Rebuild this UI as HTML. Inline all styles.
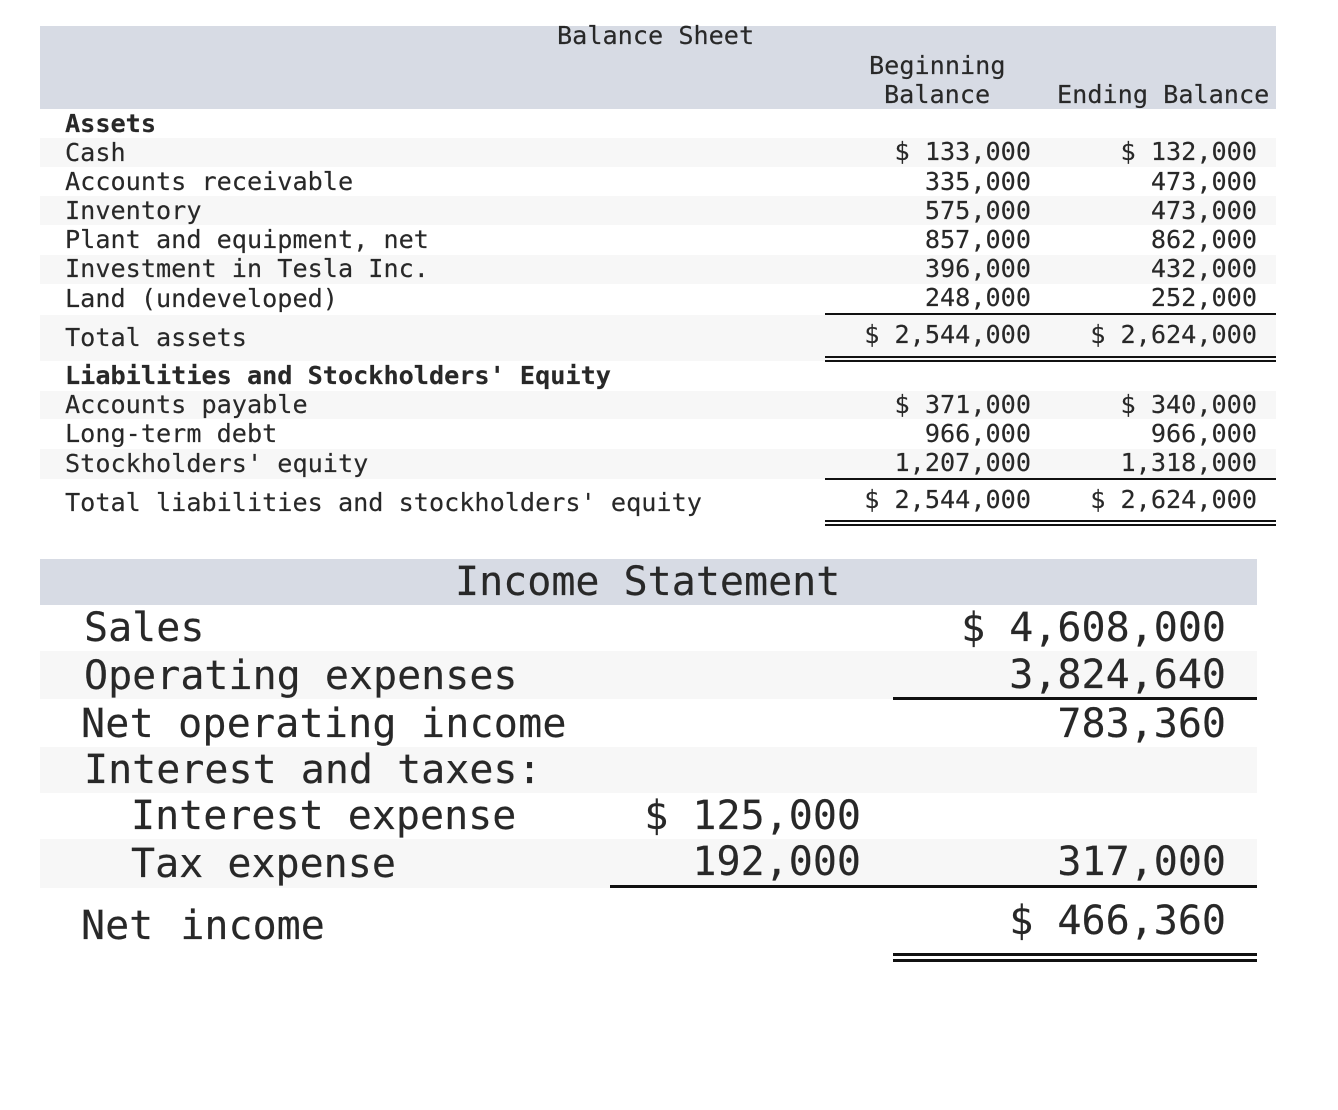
<!DOCTYPE html>
<html>
<head>
<meta charset="utf-8">
<style>
html,body{margin:0;padding:0;background:#fff;}
#p{position:relative;width:1338px;height:1110px;overflow:hidden;background:#fff;font-family:"DejaVu Sans Mono","Liberation Mono",monospace;color:#282828;-webkit-text-stroke:.15px #282828;}
#p div{position:absolute;white-space:pre;}
.b{left:40px;width:1236px;background:#f7f7f7;}
.i{left:40px;width:1217px;background:#f7f7f7;}
.b.h,.i.h{background:#d7dbe4;}
.l{background:#111;}
.s{font-size:25.2px;line-height:30px;}
.g{font-size:40px;line-height:50px;}
.r1{right:307px;}
.r2{right:81px;}
.r3{right:112px;}
.r4{right:477px;}
</style>
</head>
<body>
<div id="p">
<div class="b h" style="top:26px;height:83px"></div>
<div class="b" style="top:138px;height:29px"></div>
<div class="b" style="top:196px;height:29px"></div>
<div class="b" style="top:255px;height:29px"></div>
<div class="b" style="top:315px;height:46px"></div>
<div class="b" style="top:391px;height:28px"></div>
<div class="b" style="top:449px;height:30px"></div>
<div class="i h" style="top:559px;height:46px"></div>
<div class="i" style="top:651px;height:48px"></div>
<div class="i" style="top:747px;height:46px"></div>
<div class="i" style="top:839px;height:49px"></div>

<div class="l" style="left:825px;width:451px;top:313px;height:2px"></div>
<div class="l" style="left:825px;width:451px;top:356px;height:2px"></div>
<div class="l" style="left:825px;width:451px;top:360px;height:2px"></div>
<div class="l" style="left:825px;width:451px;top:478px;height:2px"></div>
<div class="l" style="left:825px;width:451px;top:520px;height:2px"></div>
<div class="l" style="left:825px;width:451px;top:524px;height:2px"></div>
<div class="l" style="left:893px;width:364px;top:697px;height:3px"></div>
<div class="l" style="left:610px;width:647px;top:885px;height:3px"></div>
<div class="l" style="left:893px;width:364px;top:953px;height:3px"></div>
<div class="l" style="left:893px;width:364px;top:959px;height:3px"></div>

<div class="s" style="left:557px;top:21px">Balance Sheet</div>
<div class="s" style="left:869px;top:51px">Beginning</div>
<div class="s" style="left:884px;top:80px">Balance</div>
<div class="s" style="left:1057px;top:80px">Ending Balance</div>

<div class="s" style="left:65px;top:109px;font-weight:bold">Assets</div>
<div class="s" style="left:65px;top:138px">Cash</div>
<div class="s" style="left:65px;top:167px">Accounts receivable</div>
<div class="s" style="left:65px;top:196px">Inventory</div>
<div class="s" style="left:65px;top:225px">Plant and equipment, net</div>
<div class="s" style="left:65px;top:254px">Investment in Tesla Inc.</div>
<div class="s" style="left:65px;top:284px">Land (undeveloped)</div>
<div class="s" style="left:65px;top:323px">Total assets</div>
<div class="s" style="left:65px;top:361px;font-weight:bold">Liabilities and Stockholders' Equity</div>
<div class="s" style="left:65px;top:390px">Accounts payable</div>
<div class="s" style="left:65px;top:419px">Long-term debt</div>
<div class="s" style="left:65px;top:449px">Stockholders' equity</div>
<div class="s" style="left:65px;top:488px">Total liabilities and stockholders' equity</div>

<div class="s r1" style="top:137px">$ 133,000</div>
<div class="s r1" style="top:167px">335,000</div>
<div class="s r1" style="top:196px">575,000</div>
<div class="s r1" style="top:225px">857,000</div>
<div class="s r1" style="top:254px">396,000</div>
<div class="s r1" style="top:283px">248,000</div>
<div class="s r1" style="top:320px">$ 2,544,000</div>
<div class="s r1" style="top:390px">$ 371,000</div>
<div class="s r1" style="top:419px">966,000</div>
<div class="s r1" style="top:448px">1,207,000</div>
<div class="s r1" style="top:485px">$ 2,544,000</div>

<div class="s r2" style="top:137px">$ 132,000</div>
<div class="s r2" style="top:167px">473,000</div>
<div class="s r2" style="top:196px">473,000</div>
<div class="s r2" style="top:225px">862,000</div>
<div class="s r2" style="top:254px">432,000</div>
<div class="s r2" style="top:283px">252,000</div>
<div class="s r2" style="top:320px">$ 2,624,000</div>
<div class="s r2" style="top:390px">$ 340,000</div>
<div class="s r2" style="top:419px">966,000</div>
<div class="s r2" style="top:448px">1,318,000</div>
<div class="s r2" style="top:485px">$ 2,624,000</div>

<div class="g" style="left:455px;top:557px">Income Statement</div>
<div class="g" style="left:84px;top:603px">Sales</div>
<div class="g" style="left:84px;top:651px">Operating expenses</div>
<div class="g" style="left:81px;top:699px;letter-spacing:.2px">Net operating income</div>
<div class="g" style="left:84px;top:745px">Interest and taxes:</div>
<div class="g" style="left:131px;top:791px">Interest expense</div>
<div class="g" style="left:131px;top:839px">Tax expense</div>
<div class="g" style="left:81px;top:901px;word-spacing:3px">Net income</div>

<div class="g r3" style="top:603px">$ 4,608,000</div>
<div class="g r3" style="top:650px">3,824,640</div>
<div class="g r3" style="top:699px">783,360</div>
<div class="g r3" style="top:837px">317,000</div>
<div class="g r3" style="top:896px">$ 466,360</div>
<div class="g r4" style="top:791px">$ 125,000</div>
<div class="g r4" style="top:837px">192,000</div>
</div>
</body>
</html>
